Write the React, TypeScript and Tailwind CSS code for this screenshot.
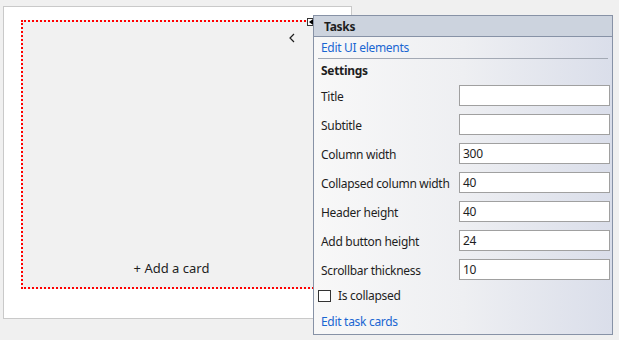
import React from "react";

const rows: [string, string][] = [
  ["Title", ""],
  ["Subtitle", ""],
  ["Column width", "300"],
  ["Collapsed column width", "40"],
  ["Header height", "40"],
  ["Add button height", "24"],
  ["Scrollbar thickness", "10"],
];

export default function App() {
  return (
    <div
      className="relative w-[619px] h-[340px] overflow-hidden bg-[#f0f0f0] text-[12px] text-[#1e1e1e] tracking-[-0.3px]"
      style={{ fontFamily: '"Noto Sans", "Open Sans", sans-serif' }}
    >
      {/* designer surface */}
      <div className="ml-[3px] mt-[6px] w-[349px] h-[313px] border border-[#c9c9c9] bg-white pl-[17px] pt-[13px]">
        <div className="relative w-[301px] h-[269px] border-2 border-dotted border-[#ff0000] bg-[#f1f1f1] flex flex-col">
          <div className="flex justify-end pr-[25px] pt-[11px] h-[30px]">
            <svg width="6" height="10" viewBox="0 0 6 10">
              <path d="M5 1 L1 5 L5 9" fill="none" stroke="#1e1e1e" strokeWidth="1.2" />
            </svg>
          </div>
          <div className="flex-1" />
          <div className="h-[28px] flex justify-center text-[13px] tracking-normal text-[#1e1e1e]">
            + Add a card
          </div>
        </div>
      </div>

      {/* smart tag glyph */}
      <div className="absolute left-[307px] top-[18px] w-[7px] h-[8px] border border-[#333] bg-white flex items-center justify-center">
        <svg width="4" height="6" viewBox="0 0 4 6">
          <path d="M4 0 L0 3 L4 6 Z" fill="#000" />
        </svg>
      </div>

      {/* tasks popup */}
      <div className="absolute left-[313px] top-[15px] w-[300px] h-[320px] border border-[#8792a6] bg-gradient-to-r from-[#f8f8f8] via-[#eeeff2] to-[#dadeea] flex flex-col">
        <div className="h-[21px] border-b border-[#8792a6] bg-[#ccd3de] pl-[10px] pt-[1px] flex items-center font-bold text-[12px]">
          Tasks
        </div>
        <div className="h-[21px] pl-[7px] pt-[1px] flex items-center text-[#1a66d2]">Edit UI elements</div>
        <div className="mx-[4px] h-px bg-[#a3a9b4]" />
        <div className="h-[22px] pl-[7px] pt-[2px] flex items-center font-bold">Settings</div>
        {rows.map(([label, value]) => (
          <div key={label} className="h-[29px] flex items-center pl-[7px]">
            <div className="w-[138px] shrink-0 pt-[2px]">{label}</div>
            <div className="w-[151px] h-[21px] border border-[#a0a0a0] bg-white px-[3px] pt-[1px] flex items-center">
              {value}
            </div>
          </div>
        ))}
        <div className="h-[23px] flex items-center pl-[4px]">
          <div className="w-[13px] h-[12px] border border-[#333] bg-white" />
          <span className="ml-[7px] pt-[1px]">Is collapsed</span>
        </div>
        <div className="h-[26px] pl-[7px] pt-[3px] flex items-center text-[#1a66d2]">Edit task cards</div>
      </div>
    </div>
  );
}
